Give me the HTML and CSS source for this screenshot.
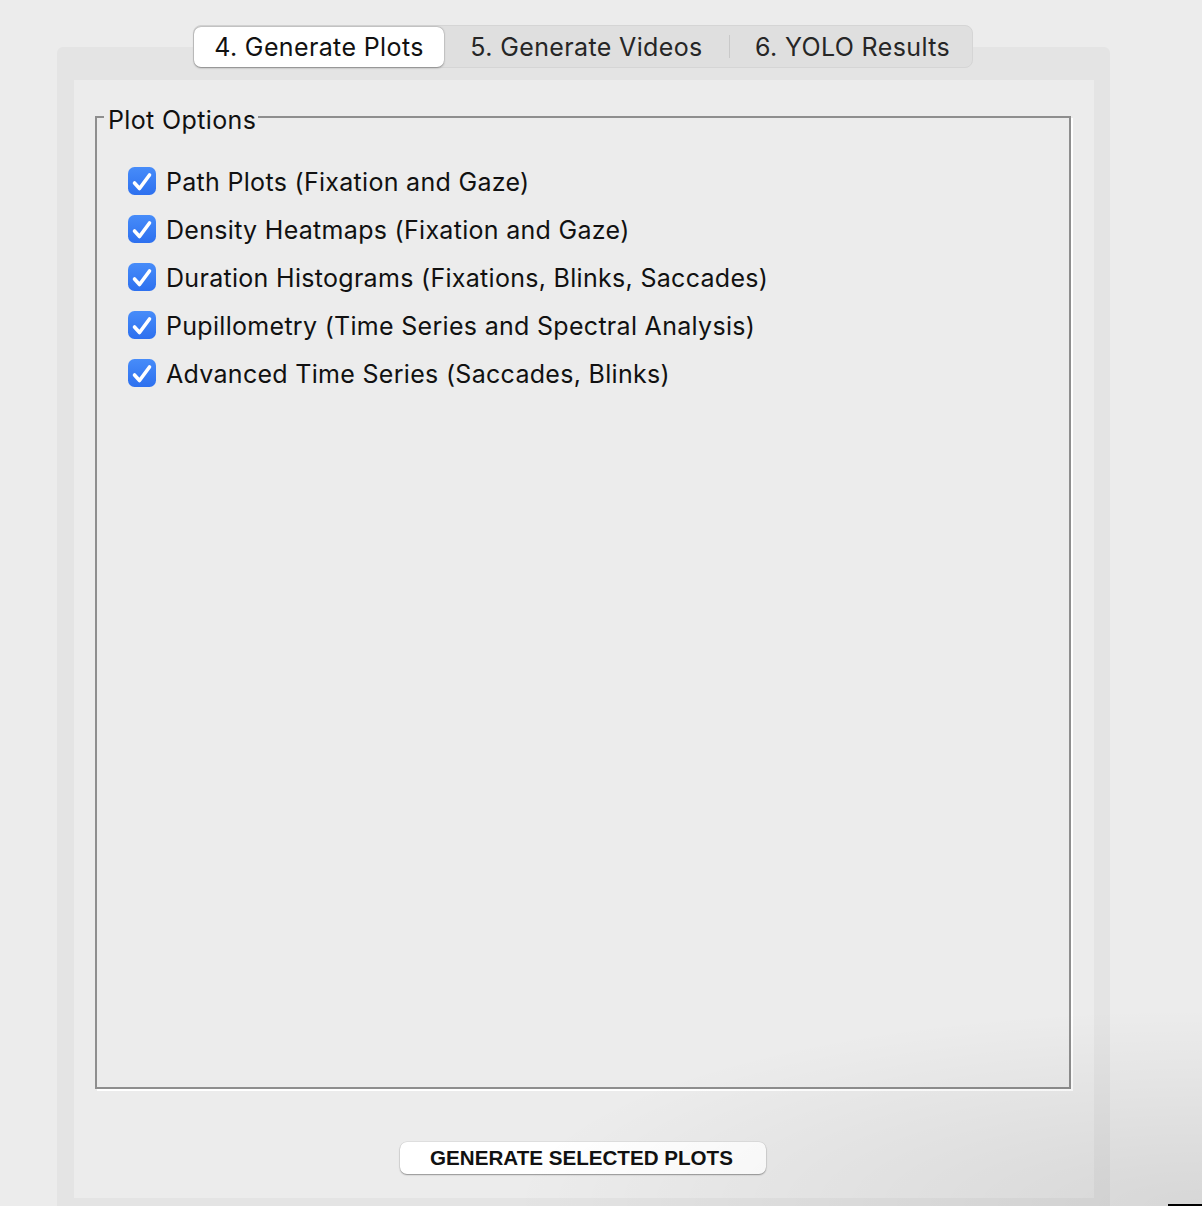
FILE: index.html
```html
<!DOCTYPE html>
<html lang="en">
<head>
<meta charset="utf-8">
<title>Generate Plots</title>
<link rel="stylesheet" href="styles.css">
</head>
<body>
<div class="window">
  <div class="tabbar">
    <div class="tab tab-1 active">4. Generate Plots</div>
    <div class="tab tab-2">5. Generate Videos</div>
    <div class="sep"></div>
    <div class="tab tab-3">6. YOLO Results</div>
  </div>
  <div class="pane">
    <div class="inner">
      <div class="group">
        <div class="group-title">Plot Options</div>
        <label class="row"><span class="cb"><svg viewBox="0 0 28 28" width="28" height="28"><defs><linearGradient id="g1" x1="0" y1="0" x2="0" y2="1"><stop offset="0" stop-color="#478cf9"/><stop offset="1" stop-color="#2d70ef"/></linearGradient></defs><rect x="0" y="0" width="28" height="28" rx="6.5" fill="url(#g1)"/><path d="M6.5 16 L11.5 21.5 L21.5 8" fill="none" stroke="#fff" stroke-width="3.6" stroke-linecap="round" stroke-linejoin="round"/></svg></span><span class="txt">Path Plots (Fixation and Gaze)</span></label>
        <label class="row"><span class="cb"><svg viewBox="0 0 28 28" width="28" height="28"><rect x="0" y="0" width="28" height="28" rx="6.5" fill="url(#g1)"/><path d="M6.5 16 L11.5 21.5 L21.5 8" fill="none" stroke="#fff" stroke-width="3.6" stroke-linecap="round" stroke-linejoin="round"/></svg></span><span class="txt">Density Heatmaps (Fixation and Gaze)</span></label>
        <label class="row"><span class="cb"><svg viewBox="0 0 28 28" width="28" height="28"><rect x="0" y="0" width="28" height="28" rx="6.5" fill="url(#g1)"/><path d="M6.5 16 L11.5 21.5 L21.5 8" fill="none" stroke="#fff" stroke-width="3.6" stroke-linecap="round" stroke-linejoin="round"/></svg></span><span class="txt">Duration Histograms (Fixations, Blinks, Saccades)</span></label>
        <label class="row"><span class="cb"><svg viewBox="0 0 28 28" width="28" height="28"><rect x="0" y="0" width="28" height="28" rx="6.5" fill="url(#g1)"/><path d="M6.5 16 L11.5 21.5 L21.5 8" fill="none" stroke="#fff" stroke-width="3.6" stroke-linecap="round" stroke-linejoin="round"/></svg></span><span class="txt">Pupillometry (Time Series and Spectral Analysis)</span></label>
        <label class="row"><span class="cb"><svg viewBox="0 0 28 28" width="28" height="28"><rect x="0" y="0" width="28" height="28" rx="6.5" fill="url(#g1)"/><path d="M6.5 16 L11.5 21.5 L21.5 8" fill="none" stroke="#fff" stroke-width="3.6" stroke-linecap="round" stroke-linejoin="round"/></svg></span><span class="txt">Advanced Time Series (Saccades, Blinks)</span></label>
      </div>
      <button class="btn">GENERATE SELECTED PLOTS</button>
    </div>
  </div>
  <div class="shade"></div>
  <div class="corner-bar"></div>
</div>
</body>
</html>
```

FILE: styles.css
```css
html, body {
  margin: 0;
  padding: 0;
  background: #ececec;
}
body {
  width: 1202px;
  height: 1206px;
  overflow: hidden;
  font-family: "Inter", "Noto Sans", sans-serif;
  color: #111;
}
.window {
  position: relative;
  width: 1202px;
  height: 1206px;
  padding-top: 25px;
  box-sizing: border-box;
}
.tabbar {
  position: relative;
  z-index: 1;
  display: flex;
  align-items: center;
  width: max-content;
  margin-left: 193px;
  height: 43px;
  box-sizing: border-box;
  padding: 1px 0;
  background: #dfdfdf;
  border: 1px solid #d5d5d5;
  border-radius: 8px;
}
.tab {
  height: 40px;
  display: flex;
  align-items: center;
  justify-content: center;
  font-size: 25px;
  letter-spacing: 0.37px;
  color: #262626;
  box-sizing: border-box;
}
.tab.active {
  background: #fff;
  color: #111;
  border-radius: 7px;
  box-shadow: 0 0.5px 2px rgba(0,0,0,0.35), 0 0 0 0.5px rgba(0,0,0,0.08);
}
.tab-1 { width: 250px; }
.tab-2 { width: 285px; }
.tab-3 { width: 242px; padding-left: 3px; }
.sep {
  width: 1px;
  height: 23px;
  background: #c9c9c9;
}
.pane {
  margin-top: -21px;
  margin-left: 57px;
  width: 1053px;
  height: 1159px;
  box-sizing: border-box;
  padding: 33px 16px 8px 17px;
  background: #e4e4e4;
  border-radius: 6px 6px 0 0;
}
.inner {
  height: 100%;
  box-sizing: border-box;
  background: #ececec;
  padding: 36px 23px 24px 21px;
  display: flex;
  flex-direction: column;
}
.group {
  position: relative;
  flex: 1;
  border: 2px solid #8e8e8e;
  box-shadow: 2px 2px 0 #fff;
  padding: 39px 0 0 31px;
}
.group-title {
  position: absolute;
  top: -12px;
  left: 7px;
  padding: 0 2px 0 4px;
  background: #ececec;
  font-size: 25px;
  letter-spacing: 0.37px;
  line-height: 28px;
  color: #111;
}
.row {
  display: flex;
  align-items: center;
  height: 48px;
}
.cb {
  width: 28px;
  height: 28px;
  display: block;
  flex: none;
}
.cb svg { display: block; }
.txt {
  margin-left: 10px;
  font-size: 25px;
  letter-spacing: 0.3px;
  line-height: 48px;
  padding-top: 2px;
  color: #111;
}
.btn {
  align-self: center;
  margin-top: 53px;
  width: 366px;
  height: 32px;
  border: none;
  border-radius: 7px;
  background: #fff;
  box-shadow: 0 1px 1.5px rgba(0,0,0,0.35), 0 0 0 0.5px rgba(0,0,0,0.1);
  font-family: "Liberation Sans", Arial, sans-serif;
  font-weight: bold;
  font-size: 20.6px;
  color: #111;
  padding: 0 3px 0 0;
}
.shade {
  position: absolute;
  right: 0;
  bottom: 0;
  width: 700px;
  height: 200px;
  background: radial-gradient(ellipse at 100% 100%, rgba(0,0,0,0.09), rgba(0,0,0,0) 70%);
  pointer-events: none;
}
.corner-bar {
  position: absolute;
  right: 0;
  bottom: 0;
  width: 34px;
  height: 2px;
  background: #000;
}
```
